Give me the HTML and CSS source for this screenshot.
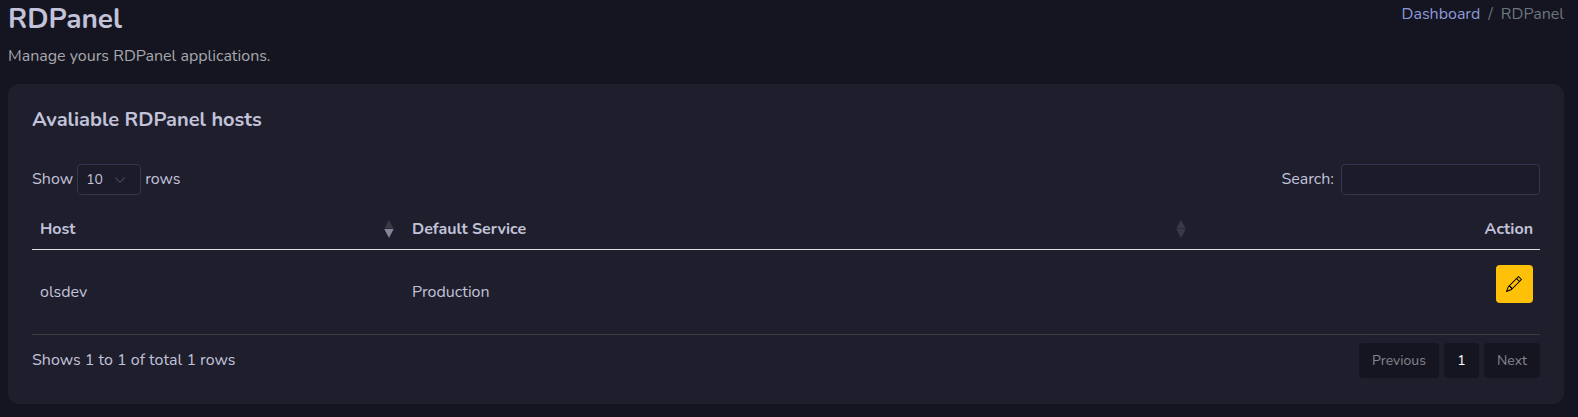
FILE: index.html
```
<!DOCTYPE html>
<html lang="en">
<head>
<meta charset="utf-8">
<title>RDPanel</title>
<link rel="stylesheet" href="styles.css">
</head>
<body>

<header class="page-title">
  <div>
    <h3>RDPanel</h3>
    <p class="text-subtitle">Manage yours RDPanel applications.</p>
  </div>
  <nav class="breadcrumb">
    <a href="#">Dashboard</a>
    <span>/</span>
    <span>RDPanel</span>
  </nav>
</header>

<section class="card">
  <h5 class="card-title">Avaliable RDPanel hosts</h5>

  <div class="table-top">
    <div class="length">
      <span class="label">Show</span>
      <button type="button" class="select">
        <span>10</span>
        <svg width="12" height="12" viewBox="0 0 16 16"><path d="m2 5 6 6 6-6"/></svg>
      </button>
      <span class="label">rows</span>
    </div>
    <label class="search"><span class="label">Search:</span><input type="text"></label>
  </div>

  <table class="table">
    <thead>
      <tr>
        <th class="col-host">
          <div class="th-inner">Host
            <svg class="sort desc" width="10" height="18" viewBox="0 0 10 18"><path class="up" d="M5 0 9.7 8.6H.3z"/><path class="down" d="M.3 9h9.4L5 18z"/></svg>
          </div>
        </th>
        <th class="col-service">
          <div class="th-inner">Default Service
            <svg class="sort" width="10" height="18" viewBox="0 0 10 18"><path class="up" d="M5 0 9.7 8.6H.3z"/><path class="down" d="M.3 9h9.4L5 18z"/></svg>
          </div>
        </th>
        <th class="col-action">Action</th>
      </tr>
    </thead>
    <tbody>
      <tr>
        <td>olsdev</td>
        <td>Production</td>
        <td class="action">
          <button type="button" class="btn-edit" aria-label="Edit">
            <svg width="16" height="16" viewBox="0 0 16 16" fill="currentColor"><path d="M12.146.146a.5.5 0 0 1 .708 0l3 3a.5.5 0 0 1 0 .708l-10 10a.5.5 0 0 1-.168.11l-5 2a.5.5 0 0 1-.65-.65l2-5a.5.5 0 0 1 .11-.168zM11.207 2.5 13.5 4.793 14.793 3.5 12.5 1.207zm1.586 3L10.5 3.207 4 9.707V10h.5a.5.5 0 0 1 .5.5v.5h.5a.5.5 0 0 1 .5.5v.5h.293zm-9.761 5.175-.106.106-1.528 3.821 3.821-1.528.106-.106A.5.5 0 0 1 5 12.5V12h-.5a.5.5 0 0 1-.5-.5V11h-.5a.5.5 0 0 1-.468-.325"/></svg>
          </button>
        </td>
      </tr>
    </tbody>
  </table>

  <div class="table-bottom">
    <span class="info">Shows 1 to 1 of total 1 rows</span>
    <div class="pagination">
      <button type="button" class="prev">Previous</button>
      <button type="button" class="active">1</button>
      <button type="button" class="next">Next</button>
    </div>
  </div>
</section>

</body>
</html>
```
FILE: styles.css
```
* {
  box-sizing: border-box;
}

body {
  margin: 0;
  padding: 0 14px 0 8px;
  height: 417px;
  overflow: hidden;
  background-color: #151521;
  color: #c2c2d9;
  font-family: Nunito, Lato, sans-serif;
  font-size: 16px;
  line-height: 24px;
}

h3, h5, p {
  margin: 0;
}

button, input {
  font-family: inherit;
}

.page-title {
  display: flex;
  justify-content: space-between;
  height: 84px;
}

.page-title h3 {
  padding-top: 2px;
  font-size: 28px;
  line-height: 34px;
}

.text-subtitle {
  margin-top: 8px;
  color: #a6a8aa;
}

.breadcrumb {
  display: flex;
  gap: 8px;
  padding-top: 2px;
  color: #6c757d;
}

.breadcrumb a {
  color: #8b9ad8;
  text-decoration: none;
}

/* Card */
.card {
  height: 320px;
  padding: 24px;
  border-radius: 11px;
  background-color: #1e1e2d;
}

.card-title {
  height: 56px;
  font-size: 20px;
  line-height: 24px;
}

.table-top {
  display: flex;
  justify-content: space-between;
  height: 31px;
}

.length, .search {
  display: flex;
  align-items: center;
}

.length {
  gap: 4px;
}

.label {
  padding-bottom: 1px;
}

.select {
  display: flex;
  justify-content: space-between;
  align-items: center;
  width: 64px;
  height: 31px;
  padding: 0 14px 0 8px;
  border: 1px solid #35354f;
  border-radius: 4px;
  background-color: #1b1b29;
  color: #c2c2d9;
  font-size: 14px;
}

.select svg {
  fill: none;
  stroke: #3c3e4c;
  stroke-width: 2;
  stroke-linecap: round;
  stroke-linejoin: round;
}

.search {
  gap: 7px;
}

.search input {
  width: 199px;
  height: 31px;
  padding: 4px 8px;
  border: 1px solid #35354f;
  border-radius: 4px;
  background-color: #1b1b29;
  color: #c2c2d9;
  font-size: 14px;
}

/* Hosts table */
.table {
  width: 100%;
  margin-top: 13px;
  border-collapse: separate;
  border-spacing: 0;
  table-layout: fixed;
}

.table th {
  height: 42px;
  padding: 0 7px 0 8px;
  border-bottom: 1px solid #dededf;
  text-align: left;
}

.table td {
  height: 85px;
  padding: 0 7px 0 8px;
  border-bottom: 1px solid #3b3c3d;
}

.col-host {
  width: 372px;
}

.col-action {
  width: 344px;
}

.table .col-action, .table .action {
  text-align: right;
}

.th-inner {
  display: flex;
  justify-content: space-between;
  align-items: center;
  padding-right: 3px;
}

.sort {
  fill: #393948;
}

.sort.desc .down {
  fill: #85849a;
}

.table .action {
  padding-top: 15px;
  vertical-align: top;
}

.btn-edit {
  display: inline-flex;
  justify-content: center;
  align-items: center;
  width: 37px;
  height: 38px;
  padding: 0 1px 0 0;
  border: none;
  border-radius: 4px;
  background-color: #ffc107;
  color: #000;
  cursor: pointer;
}

/* Info and pagination */
.table-bottom {
  display: flex;
  justify-content: space-between;
  padding-top: 8px;
}

.info {
  padding-top: 5px;
}

.pagination {
  display: flex;
  gap: 5px;
}

.pagination button {
  width: 35px;
  height: 35px;
  padding: 0;
  border: none;
  border-radius: 4px;
  background-color: #151521;
  color: #85858f;
  font-size: 14px;
}

.pagination .prev {
  width: 80px;
}

.pagination .active {
  color: #fff;
}

.pagination .next {
  width: 56px;
}
```
